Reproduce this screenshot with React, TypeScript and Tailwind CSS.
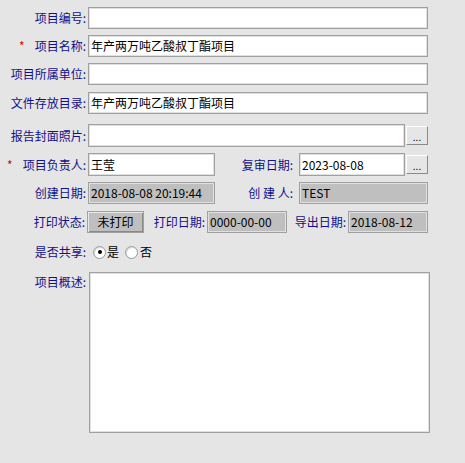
import React from 'react';

const font = { fontFamily: '"Noto Sans CJK SC", "Noto Sans", sans-serif' };

const Label: React.FC<{ text: string; required?: boolean; w?: string; pr?: string }> = ({ text, required, w = 'w-[88px]', pr = 'pr-[2px]' }) => (
  <div className={`${w} ${pr} shrink-0 flex items-center justify-end text-[12px] text-[#10108a] leading-none`}>
    {required && <span className="text-[#e00000] mr-[10px]">*</span>}
    <span>{text}</span>
  </div>
);

const Field: React.FC<{ value?: string; w: string; readOnly?: boolean }> = ({ value = '', w, readOnly }) => (
  <div
    className={`${w} h-full border border-[#a0a0a0] shadow-[inset_1px_1px_0_#e0e0e0,inset_-1px_-1px_0_#e0e0e0] ${readOnly ? 'bg-[#bfbfbf]' : 'bg-white'} flex items-center pl-[2px] text-[12px] text-black leading-none whitespace-nowrap overflow-hidden`}
  >
    {value}
  </div>
);

const DotsButton: React.FC = () => (
  <div className="ml-[1px] w-[22px] h-[19px] self-center bg-[#e6e6e6] border border-t-white border-l-white border-r-[#8a8a8a] border-b-[#8a8a8a] flex items-end justify-center pb-[2px] text-[10px] leading-none text-black">
    ...
  </div>
);

const Radio: React.FC<{ checked?: boolean }> = ({ checked }) => (
  <span className="w-[13px] h-[13px] rounded-full bg-white border border-[#9a9a9a] shadow-[inset_1px_1px_0_#d8d8d8] flex items-center justify-center">
    {checked && <span className="w-[4px] h-[4px] rounded-full bg-black" />}
  </span>
);

export default function App() {
  return (
    <div className="w-[465px] h-[463px] bg-[#e5e5e5] pt-[7px]" style={font}>
      <div className="flex h-[22px]">
        <Label text="项目编号:" />
        <Field w="w-[340px]" />
      </div>
      <div className="flex h-[22px] mt-[6px]">
        <Label text="项目名称:" required />
        <Field w="w-[340px]" value="年产两万吨乙酸叔丁酯项目" />
      </div>
      <div className="flex h-[22px] mt-[6px]">
        <Label text="项目所属单位:" />
        <Field w="w-[340px]" />
      </div>
      <div className="flex h-[22px] mt-[7px]">
        <Label text="文件存放目录:" />
        <Field w="w-[340px]" value="年产两万吨乙酸叔丁酯项目" />
      </div>
      <div className="flex h-[23px] mt-[10px]">
        <Label text="报告封面照片:" />
        <Field w="w-[317px]" />
        <DotsButton />
      </div>
      <div className="flex h-[23px] mt-[6px]">
        <Label text="项目负责人:" required />
        <Field w="w-[127px]" value="王莹" />
        <Label text="复审日期:" w="w-[84px]" pr="pr-[6px]" />
        <Field w="w-[106px]" value="2023-08-08" />
        <DotsButton />
      </div>
      <div className="flex h-[22px] mt-[6px]">
        <Label text="创建日期:" />
        <Field w="w-[127px]" value="2018-08-08 20:19:44" readOnly />
        <Label text="创 建 人:" w="w-[84px]" pr="pr-[6px]" />
        <Field w="w-[129px]" value="TEST" readOnly />
      </div>
      <div className="flex h-[22px] mt-[7px]">
        <Label text="打印状态:" w="w-[87px]" />
        <div className="w-[57px] h-full bg-[#bfbfbf] border border-[#a0a0a0] shadow-[inset_1px_1px_0_#e8e8e8,inset_-1px_-1px_0_#8a8a8a] flex items-center justify-center text-[12px] text-black leading-none">
          未打印
        </div>
        <Label text="打印日期:" w="w-[63px]" />
        <Field w="w-[80px]" value="0000-00-00" readOnly />
        <Label text="导出日期:" w="w-[61px]" />
        <Field w="w-[80px]" value="2018-08-12" readOnly />
      </div>
      <div className="flex h-[20px] mt-[9px] items-center">
        <Label text="是否共享:" />
        <div className="ml-[5px] flex items-center text-[12px] text-black leading-none">
          <Radio checked />
          <span className="ml-[1px]">是</span>
          <span className="ml-[6px]"><Radio /></span>
          <span className="ml-[2px]">否</span>
        </div>
      </div>
      <div className="flex mt-[10px]">
        <div className="w-[89px] shrink-0 flex justify-end pr-[3px] pt-[4px] text-[12px] text-[#10108a] leading-none">
          项目概述:
        </div>
        <div className="w-[341px] h-[161px] bg-white border border-[#a0a0a0] shadow-[inset_1px_1px_0_#e0e0e0,inset_-1px_-1px_0_#e0e0e0]" />
      </div>
    </div>
  );
}
